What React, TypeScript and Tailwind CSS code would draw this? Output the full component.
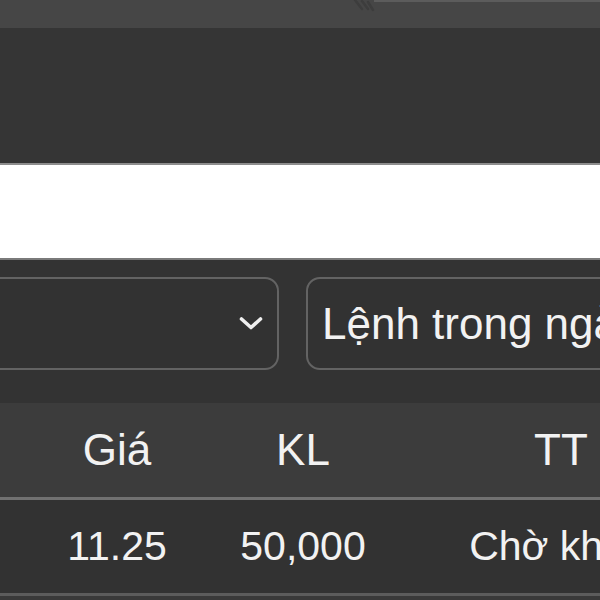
import React from 'react'

const columns = [
  { key: 'price', label: 'Giá' },
  { key: 'qty', label: 'KL' },
  { key: 'status', label: 'TT' },
]

const orders = [{ id: 1, price: '11.25', qty: '50,000', status: 'Chờ khớp' }]

const Chevron = () => (
  <svg width="24" height="15" viewBox="0 0 24 15" fill="none">
    <polyline
      points="2.5,3 12,11.5 21.5,3"
      stroke="#efefef"
      strokeWidth="3.6"
      strokeLinecap="round"
      strokeLinejoin="round"
    />
  </svg>
)

const App = () => {
  return (
    <div className="h-[600px] w-[600px] overflow-hidden bg-[#333333] font-['Liberation_Sans',Arial,sans-serif] text-[#f2f2f2]">
      {/* top bar */}
      <div className="relative h-[28px] bg-[#464646]">
        <div className="absolute right-0 top-0 h-[2px] w-[226px] bg-[#5c5c5c]" />
        <svg className="absolute left-[352px] top-0" width="24" height="13" viewBox="0 0 24 13" fill="none">
          <path d="M3 0 L10 9 M10 1 L16 9 M16 2 L21 10" stroke="#3d3d3d" strokeWidth="2.5" strokeLinecap="round" />
        </svg>
      </div>

      <div className="h-[135px] bg-[#353535]" />

      <div className="h-[97px] border-y-[2px] border-t-[#8d8d8d] border-b-[#7a7a7a] bg-white" />

      {/* filters */}
      <div className="flex h-[143px] gap-[27px] bg-[#333333] pt-[17px]">
        <div className="ml-[-40px] flex h-[93px] w-[319px] shrink-0 items-center justify-end rounded-[14px] border-2 border-[#636363] bg-[#323232] pr-[14px]">
          <Chevron />
        </div>
        <div className="flex h-[93px] w-[360px] shrink-0 items-center rounded-[14px] border-2 border-[#636363] bg-[#323232] pl-[14px]">
          <span className="whitespace-nowrap text-[44px] leading-none">Lệnh trong ngày</span>
        </div>
      </div>

      {/* table */}
      <div className="grid h-[97px] w-[750px] grid-cols-[234px_138px_378px] items-center border-b-[3px] border-[#717171] bg-[#3c3c3c]">
        {columns.map((col) => (
          <div key={col.key} className="whitespace-nowrap text-center text-[44px] leading-none">
            {col.label}
          </div>
        ))}
      </div>
      {orders.map((order) => (
        <div
          key={order.id}
          className="grid h-[96px] w-[750px] grid-cols-[234px_138px_378px] items-center border-b-[3px] border-[#5c5c5c] bg-[#323232]"
        >
          <div className="text-center text-[41px] leading-none">{order.price}</div>
          <div className="text-center text-[41px] leading-none">{order.qty}</div>
          <div className="whitespace-nowrap text-center text-[41px] leading-none">{order.status}</div>
        </div>
      ))}
      <div className="h-[10px] bg-[#393939]" />
    </div>
  )
}

export default App
